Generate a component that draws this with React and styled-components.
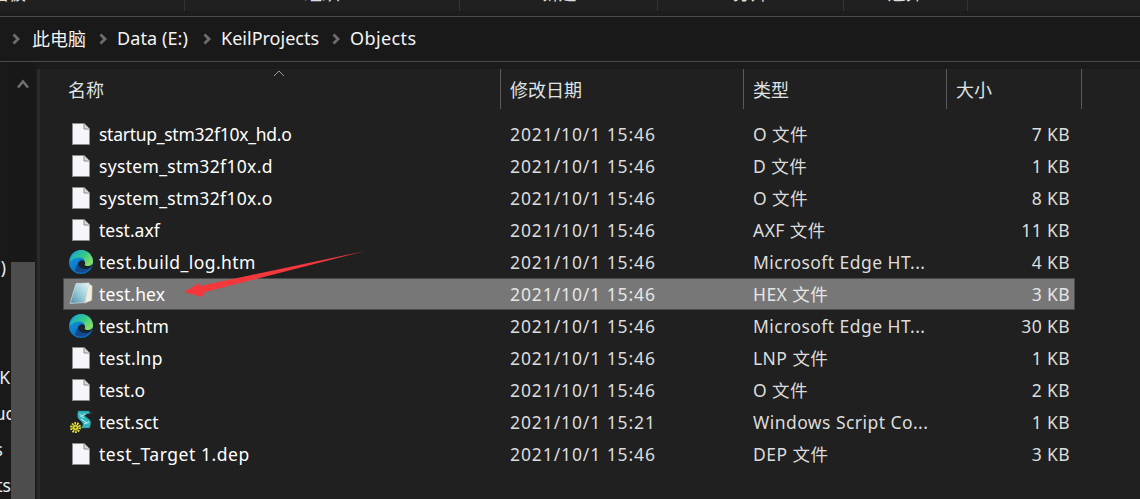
import styled, { createGlobalStyle } from "styled-components";

const GlobalStyle = createGlobalStyle`
	html, body {
		margin: 0;
		padding: 0;
		background-color: #191919;
	}
	* {
		box-sizing: border-box;
	}
`;

const Page = styled.div`
	display: flex;
	flex-direction: column;
	position: relative;
	width: 1140px;
	height: 499px;
	overflow: hidden;
	background-color: #191919;
	font-family: "Noto Sans", "Noto Sans CJK SC", sans-serif;
	font-size: 17.5px;
	color: #f2f2f2;
`;

const Ribbon = styled.div`
	display: flex;
	height: 16px;
	background-color: #1c1c1c;
`;

const RibbonGroup = styled.div`
	display: flex;
	justify-content: center;
	align-items: flex-end;
	flex: none;
	width: ${(props) => props.width}px;
	height: 11px;
	overflow: hidden;
	border-right: 1px solid #343434;
	background-color: #202020;
	font-size: 18px;
	line-height: 26px;
	color: #dcdcdc;
	white-space: nowrap;

	& span {
		flex: none;
		margin-bottom: 5px;
	}
`;

const RibbonRest = styled.div`
	flex: 1;
	height: 11px;
	background-color: #202020;
`;

const FirstGroupLabel = styled.span`
	margin-right: 156px;
	margin-left: -30px;
`;

const AddressBar = styled.div`
	display: flex;
	align-items: center;
	gap: 10px;
	height: 46px;
	padding-left: 12px;
	border-top: 1px solid #4a4a4a;
	border-bottom: 1px solid #4a4a4a;
	background-color: #191919;
`;

const Crumb = styled.span`
	position: relative;
	top: -1px;
	margin-left: ${(props) => props.lead || 0}px;
	margin-right: ${(props) => (props.trail === undefined ? 5 : props.trail)}px;
	letter-spacing: ${(props) => props.tracking || 0}px;
	color: #f4f4f4;
	font-size: 18px;
`;

const Main = styled.div`
	display: flex;
	flex: 1;
	min-height: 0;
`;

const NavLabels = styled.div`
	display: flex;
	flex-direction: column;
	flex: none;
	width: 11px;
	padding-top: 187px;
	overflow: hidden;
	background-color: #191919;
`;

const NavLabel = styled.div`
	display: flex;
	justify-content: flex-end;
	height: 36px;
	line-height: 36px;
	white-space: nowrap;
	color: #e2eef6;

	& span {
		flex: none;
		margin-right: ${(props) => props.shift || 0}px;
	}
`;

const NavGap = styled.div`
	flex: none;
	height: 74px;
`;

const ScrollRail = styled.div`
	display: flex;
	flex-direction: column;
	align-items: center;
	flex: none;
	width: 24px;
	padding-top: 17px;
	background-color: #181818;
`;

const ScrollThumb = styled.div`
	align-self: stretch;
	height: 237px;
	margin-top: auto;
	background-color: #4d4d4d;
`;

const ListPane = styled.div`
	display: flex;
	flex-direction: column;
	flex: 1;
	padding-top: 7px;
	padding-left: 2px;
	background-color: #1b1b1b;
`;

const ListBody = styled.div`
	flex: 1;
	border-left: 3px solid #2a2a2a;
	background-color: #202020;
`;

const Header = styled.div`
	display: flex;
	height: 40px;
`;

const HeaderCell = styled.div`
	display: flex;
	align-items: center;
	flex: none;
	width: ${(props) => props.width}px;
	padding-left: ${(props) => props.pad}px;
	border-right: 1px solid #5a5a5a;
	font-size: 18px;
	color: #dfe3e6;
`;

const SortCaret = styled.svg`
	position: absolute;
	left: 273px;
	top: 70px;
`;

const Rows = styled.div`
	display: flex;
	flex-direction: column;
	margin-top: 9px;
	margin-left: 23px;
	width: 1012px;
`;

const Row = styled.div`
	display: grid;
	grid-template-columns: 35px 411px 243px 1fr auto;
	align-items: center;
	height: 32px;
	padding-right: 4px;
	line-height: 24px;
	border: 1px solid ${(props) => (props.selected ? "#4a4a4a" : "transparent")};
	background-color: ${(props) => (props.selected ? "#777777" : "transparent")};
`;

const IconCell = styled.div`
	display: flex;
	justify-content: center;
	align-items: center;
	height: 24px;
	padding-right: 1px;
`;

const NameCell = styled.div`
	letter-spacing: ${(props) => props.tracking || 0}px;
	color: #ffffff;
	white-space: nowrap;
`;

const InfoCell = styled.div`
	letter-spacing: ${(props) => props.tracking}px;
	color: ${(props) => (props.selected ? "#e6e6e6" : "#dcdcdc")};
	white-space: nowrap;
`;

const Arrow = styled.svg`
	position: absolute;
	left: 0;
	top: 0;
	pointer-events: none;
`;

const Chevron = () => (
	<svg width="8" height="12" viewBox="0 0 8 12" style={{ flex: "none" }}>
		<path d="M1.5 1.5 L6 6 L1.5 10.5" fill="none" stroke="#6e6e6e" strokeWidth="2.8" />
	</svg>
);

const PlainFile = () => (
	<svg width="18" height="22" viewBox="0 0 18 22">
		<path d="M0.5 0.5 H12 L17.5 6 V21.5 H0.5 Z" fill="#f4f6f9" stroke="#8c8c8c" />
		<path d="M12 0.5 V6 H17.5" fill="#d9dce0" stroke="#8c8c8c" />
	</svg>
);

const EdgeFile = () => (
	<svg width="24" height="24" viewBox="0 0 24 24">
		<defs>
			<linearGradient id="edgeBlue" x1="0" y1="0" x2="0.6" y2="1">
				<stop offset="0" stopColor="#12a0e4" />
				<stop offset="1" stopColor="#0b66bd" />
			</linearGradient>
			<linearGradient id="edgeGreen" x1="0" y1="0" x2="1" y2="0.6">
				<stop offset="0" stopColor="#17a4d4" />
				<stop offset="0.6" stopColor="#35c88a" />
				<stop offset="1" stopColor="#86e060" />
			</linearGradient>
		</defs>
		<circle cx="12" cy="12" r="12" fill="url(#edgeBlue)" />
		<path
			d="M6 21 C7.5 15 10 11 13 10.5 C15.5 10.5 16.5 12 16.5 13.5 L11.5 14 C10.5 15.5 12 18.5 15.5 19 C17.5 19.3 19 19 20.5 18 C18.5 21 15 22.5 12 22.5 C10 22.5 8 22 6 21 Z"
			fill="#134a8c"
		/>
		<path
			d="M9 14 C9 11.5 11.5 10 13.5 10.2 C15.5 10.4 16.8 12 16.3 13.8 C17.8 15.5 21 15.5 23.6 14 C23 16 22 17.5 20.5 18.2 C18 19.6 14 19.4 11.5 17.5 C10 16.5 9 15.5 9 14 Z"
			fill="#1a2430"
		/>
		<path
			d="M1.5 9 C3 3.5 7.5 0 12 0 C19 0 24 5.5 24 11.5 C24 14.5 21.5 16 19 16 C17 16 15.5 15.3 15.8 14.5 C16.8 12.5 15.5 7.5 10.5 7.5 C7 7.5 3.5 9 1.5 11.5 Z"
			fill="url(#edgeGreen)"
		/>
	</svg>
);

const HexFile = () => (
	<svg width="24" height="24" viewBox="0 0 24 24">
		<defs>
			<linearGradient id="hexPage" x1="0" y1="1" x2="1" y2="0">
				<stop offset="0" stopColor="#4f8fa2" />
				<stop offset="0.5" stopColor="#9accd9" />
				<stop offset="1" stopColor="#e6f5f8" />
			</linearGradient>
		</defs>
		<path d="M19.5 1 L23.5 4 L23 18.5 L15.5 21.5 Z" fill="#f2eddc" stroke="#8f8d7c" strokeWidth="0.6" />
		<path d="M7 1.5 L20 1 L15.5 20.5 L1 21.5 Z" fill="url(#hexPage)" stroke="#dcebee" strokeWidth="0.6" />
	</svg>
);

const ScriptFile = () => (
	<svg width="24" height="24" viewBox="0 0 24 24">
		<path
			d="M9 1 H20 L21 3.5 L15.5 4.5 C15 5.5 16 6.5 18.5 8 C21.5 10 22.5 12 21.5 15 L20.5 18 H11.5 C13.5 16 14.5 15 13.5 13 C12.5 11 8.5 9 8.5 6 Z"
			fill="#35b8bd"
			stroke="#1b6f78"
			strokeWidth="0.5"
		/>
		<path d="M10.5 4 L15 8 M12 9 L18 13 M15 14 L20 12 M11.5 6.5 L17 4" stroke="#d3f3f3" strokeWidth="0.9" />
		<path d="M20 1 L23.5 2.5 L21 4 Z" fill="#3a3f40" />
		<circle cx="6.5" cy="17.5" r="4.2" fill="none" stroke="#e8e23a" strokeWidth="2.6" strokeDasharray="1.6 1" />
		<circle cx="6.5" cy="17.5" r="2.8" fill="#d9d32e" />
		<circle cx="6.5" cy="17.5" r="1" fill="#3c3a10" />
	</svg>
);

const icons = {
	plain: PlainFile,
	edge: EdgeFile,
	hex: HexFile,
	script: ScriptFile,
};

const files = [
	{ name: "startup_stm32f10x_hd.o", tracking: -0.27, date: "2021/10/1 15:46", type: "O 文件", size: "7 KB", icon: "plain" },
	{ name: "system_stm32f10x.d", tracking: 0.33, date: "2021/10/1 15:46", type: "D 文件", size: "1 KB", icon: "plain" },
	{ name: "system_stm32f10x.o", tracking: 0.33, date: "2021/10/1 15:46", type: "O 文件", size: "8 KB", icon: "plain" },
	{ name: "test.axf", date: "2021/10/1 15:46", type: "AXF 文件", size: "11 KB", icon: "plain" },
	{ name: "test.build_log.htm", tracking: 0.45, date: "2021/10/1 15:46", type: "Microsoft Edge HT...", size: "4 KB", icon: "edge" },
	{ name: "test.hex", tracking: 0.12, date: "2021/10/1 15:46", type: "HEX 文件", size: "3 KB", icon: "hex", selected: true },
	{ name: "test.htm", tracking: 0.12, date: "2021/10/1 15:46", type: "Microsoft Edge HT...", size: "30 KB", icon: "edge" },
	{ name: "test.lnp", tracking: 0.25, date: "2021/10/1 15:46", type: "LNP 文件", size: "1 KB", icon: "plain" },
	{ name: "test.o", date: "2021/10/1 15:46", type: "O 文件", size: "2 KB", icon: "plain" },
	{ name: "test.sct", tracking: 0.12, date: "2021/10/1 15:21", type: "Windows Script Co...", size: "1 KB", icon: "script" },
	{ name: "test_Target 1.dep", tracking: 0.55, date: "2021/10/1 15:46", type: "DEP 文件", size: "3 KB", icon: "plain" },
];

const FileRow = ({ file }) => {
	const Icon = icons[file.icon];
	return (
		<Row selected={file.selected}>
			<IconCell>
				<Icon />
			</IconCell>
			<NameCell tracking={file.tracking}>{file.name}</NameCell>
			<InfoCell selected={file.selected} tracking={0.9}>{file.date}</InfoCell>
			<InfoCell selected={file.selected} tracking={0.45}>{file.type}</InfoCell>
			<InfoCell selected={file.selected} tracking={0.4}>{file.size}</InfoCell>
		</Row>
	);
};

export default function App() {
	return (
		<Page>
			<GlobalStyle />
			<Ribbon>
				<RibbonGroup width={185}>
					<FirstGroupLabel>剪贴板</FirstGroupLabel>
				</RibbonGroup>
				<RibbonGroup width={275}>
					<span>组织</span>
				</RibbonGroup>
				<RibbonGroup width={198}>
					<span>新建</span>
				</RibbonGroup>
				<RibbonGroup width={186}>
					<span>打开</span>
				</RibbonGroup>
				<RibbonGroup width={124}>
					<span>选择</span>
				</RibbonGroup>
				<RibbonRest />
			</Ribbon>
			<AddressBar>
				<Chevron />
				<Crumb lead={2} trail={3}>此电脑</Crumb>
				<Chevron />
				<Crumb tracking={0.1}>Data (E:)</Crumb>
				<Chevron />
				<Crumb trail={3}>KeilProjects</Crumb>
				<Chevron />
				<Crumb tracking={0.4}>Objects</Crumb>
			</AddressBar>
			<Main>
				<NavLabels>
					<NavLabel shift={5}>
						<span>)</span>
					</NavLabel>
					<NavGap />
					<NavLabel shift={1}>
						<span>oK</span>
					</NavLabel>
					<NavLabel shift={-3}>
						<span>uc</span>
					</NavLabel>
					<NavLabel shift={8}>
						<span>s</span>
					</NavLabel>
					<NavLabel>
						<span>ts</span>
					</NavLabel>
				</NavLabels>
				<ScrollRail>
					<svg width="12" height="10" viewBox="0 0 12 10">
						<path d="M1 8.5 L6 2.5 L11 8.5" fill="none" stroke="#707070" strokeWidth="2.6" />
					</svg>
					<ScrollThumb />
				</ScrollRail>
				<ListPane>
					<ListBody>
						<Header>
							<HeaderCell width={461} pad={28}>名称</HeaderCell>
							<HeaderCell width={243} pad={9}>修改日期</HeaderCell>
							<HeaderCell width={203} pad={9}>类型</HeaderCell>
							<HeaderCell width={135} pad={9}>大小</HeaderCell>
						</Header>
						<Rows>
							{files.map((file) => (
								<FileRow key={file.name} file={file} />
							))}
						</Rows>
					</ListBody>
				</ListPane>
			</Main>
			<SortCaret width="12" height="7" viewBox="0 0 12 7">
				<path d="M1 6 L6 1 L11 6" fill="none" stroke="#9a9a9a" strokeWidth="1" />
			</SortCaret>
			<Arrow width="1140" height="499" viewBox="0 0 1140 499">
				<path d="M365 251 L200 286 L199 283 L184 292 L202 297 L205 292 Z" fill="#f2383c" />
			</Arrow>
		</Page>
	);
}
